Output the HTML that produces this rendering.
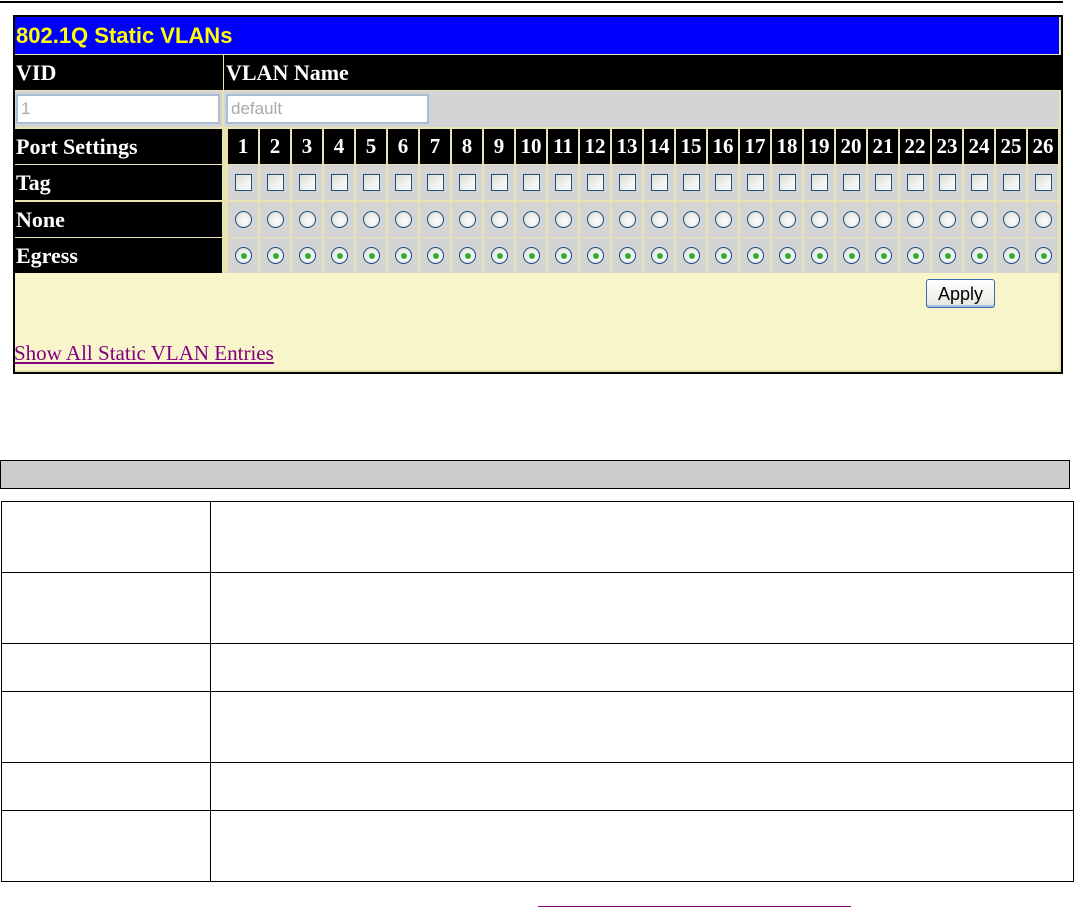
<!DOCTYPE html><html><head><style>
body{margin:0;width:1075px;height:908px;background:#fff;position:relative;overflow:hidden;font-family:"Liberation Serif",serif}
.a{position:absolute}
.row{position:absolute;left:14px;display:flex;height:35px}
.lab{width:208px;margin-right:4px;background:#000;color:#fff;font-weight:bold;font-size:22px;line-height:35px;padding-left:2px;box-sizing:border-box}
.c{width:30px;margin-left:2px;background:#d4d4d4;display:flex;align-items:center;justify-content:center}
.h .c{background:#000;color:#fff;font-weight:bold;font-size:21px}
.cb{width:15px;height:15px;border:1px solid #1c5180;background:linear-gradient(135deg,#dcdcd6,#fff)}
.rd{width:15px;height:15px;border:1px solid #1c5180;border-radius:50%;background:radial-gradient(circle at 60% 60%,#fff,#d8d8d2);position:relative}
.eg .rd::after{content:"";position:absolute;left:5px;top:5px;width:6px;height:6px;border-radius:50%;background:#2fb12f}
.inp{position:absolute;height:30px;border:2px solid #a9bed4;background:#fff;box-sizing:border-box;font-family:"Liberation Sans",sans-serif;font-size:17px;color:#aaa;padding-left:3px;line-height:26px}
</style></head><body>
<div class="a" style="left:0;top:1px;width:1063px;height:2px;background:#000"></div>
<div class="a" style="left:13px;top:15px;width:1046px;height:355px;border:2px solid #000;background:#e8e4b2"></div>
<div class="a" style="left:15px;top:273px;width:1044px;height:97px;background:#f7f5c9"></div>
<div class="a" style="left:15px;top:17px;width:1044px;height:37px;background:#0000ff;color:#ffff00;font-family:'Liberation Sans',sans-serif;font-size:22px;font-weight:bold;line-height:37px;padding-left:1px;box-sizing:border-box">802.1Q Static VLANs</div>
<div class="a" style="left:15px;top:55px;width:207px;height:35px;background:#000;color:#fff;font-weight:bold;font-size:22px;line-height:35px;padding-left:1px">VID</div>
<div class="a" style="left:224px;top:55px;width:835px;height:35px;background:#000;color:#fff;font-weight:bold;font-size:22px;line-height:35px;padding-left:2px">VLAN Name</div>
<div class="a" style="left:15px;top:91px;width:1044px;height:36px;background:#d4d4d4"></div>
<div class="a" style="left:222px;top:91px;width:2px;height:37px;background:#e8e4b2"></div>
<div class="inp" style="left:16px;top:94px;width:204px">1</div>
<div class="inp" style="left:226px;top:94px;width:203px">default</div>
<div class="row h" style="top:129px"><div class="lab">Port Settings</div><div class="c">1</div><div class="c">2</div><div class="c">3</div><div class="c">4</div><div class="c">5</div><div class="c">6</div><div class="c">7</div><div class="c">8</div><div class="c">9</div><div class="c">10</div><div class="c">11</div><div class="c">12</div><div class="c">13</div><div class="c">14</div><div class="c">15</div><div class="c">16</div><div class="c">17</div><div class="c">18</div><div class="c">19</div><div class="c">20</div><div class="c">21</div><div class="c">22</div><div class="c">23</div><div class="c">24</div><div class="c">25</div><div class="c">26</div></div>
<div class="row" style="top:165px"><div class="lab">Tag</div><div class="c"><i class="cb"></i></div><div class="c"><i class="cb"></i></div><div class="c"><i class="cb"></i></div><div class="c"><i class="cb"></i></div><div class="c"><i class="cb"></i></div><div class="c"><i class="cb"></i></div><div class="c"><i class="cb"></i></div><div class="c"><i class="cb"></i></div><div class="c"><i class="cb"></i></div><div class="c"><i class="cb"></i></div><div class="c"><i class="cb"></i></div><div class="c"><i class="cb"></i></div><div class="c"><i class="cb"></i></div><div class="c"><i class="cb"></i></div><div class="c"><i class="cb"></i></div><div class="c"><i class="cb"></i></div><div class="c"><i class="cb"></i></div><div class="c"><i class="cb"></i></div><div class="c"><i class="cb"></i></div><div class="c"><i class="cb"></i></div><div class="c"><i class="cb"></i></div><div class="c"><i class="cb"></i></div><div class="c"><i class="cb"></i></div><div class="c"><i class="cb"></i></div><div class="c"><i class="cb"></i></div><div class="c"><i class="cb"></i></div></div>
<div class="row" style="top:202px"><div class="lab">None</div><div class="c"><i class="rd"></i></div><div class="c"><i class="rd"></i></div><div class="c"><i class="rd"></i></div><div class="c"><i class="rd"></i></div><div class="c"><i class="rd"></i></div><div class="c"><i class="rd"></i></div><div class="c"><i class="rd"></i></div><div class="c"><i class="rd"></i></div><div class="c"><i class="rd"></i></div><div class="c"><i class="rd"></i></div><div class="c"><i class="rd"></i></div><div class="c"><i class="rd"></i></div><div class="c"><i class="rd"></i></div><div class="c"><i class="rd"></i></div><div class="c"><i class="rd"></i></div><div class="c"><i class="rd"></i></div><div class="c"><i class="rd"></i></div><div class="c"><i class="rd"></i></div><div class="c"><i class="rd"></i></div><div class="c"><i class="rd"></i></div><div class="c"><i class="rd"></i></div><div class="c"><i class="rd"></i></div><div class="c"><i class="rd"></i></div><div class="c"><i class="rd"></i></div><div class="c"><i class="rd"></i></div><div class="c"><i class="rd"></i></div></div>
<div class="row eg" style="top:238px"><div class="lab">Egress</div><div class="c"><i class="rd"></i></div><div class="c"><i class="rd"></i></div><div class="c"><i class="rd"></i></div><div class="c"><i class="rd"></i></div><div class="c"><i class="rd"></i></div><div class="c"><i class="rd"></i></div><div class="c"><i class="rd"></i></div><div class="c"><i class="rd"></i></div><div class="c"><i class="rd"></i></div><div class="c"><i class="rd"></i></div><div class="c"><i class="rd"></i></div><div class="c"><i class="rd"></i></div><div class="c"><i class="rd"></i></div><div class="c"><i class="rd"></i></div><div class="c"><i class="rd"></i></div><div class="c"><i class="rd"></i></div><div class="c"><i class="rd"></i></div><div class="c"><i class="rd"></i></div><div class="c"><i class="rd"></i></div><div class="c"><i class="rd"></i></div><div class="c"><i class="rd"></i></div><div class="c"><i class="rd"></i></div><div class="c"><i class="rd"></i></div><div class="c"><i class="rd"></i></div><div class="c"><i class="rd"></i></div><div class="c"><i class="rd"></i></div></div>
<div class="a" style="left:926px;top:279px;width:69px;height:29px;border:1px solid #3c6ab0;border-radius:3px;background:linear-gradient(#fff,#e6e6e0);box-shadow:inset 0 -2px 0 #a8c0e8;font-family:'Liberation Sans',sans-serif;font-size:18px;line-height:28px;text-align:center;box-sizing:border-box">Apply</div>
<div class="a" style="left:14px;top:340px;color:#800080;font-size:21px;line-height:26px;text-decoration:underline">Show All Static VLAN Entries</div>
<div class="a" style="left:0;top:460px;width:1070px;height:29px;border:1px solid #000;background:#cccccc;box-sizing:border-box"></div>
<div class="a" style="left:1px;top:501px;width:1073px;height:381px;border:1px solid #000;box-sizing:border-box"></div>
<div class="a" style="left:210px;top:501px;width:1px;height:381px;background:#000"></div>
<div class="a" style="left:1px;top:572px;width:1073px;height:1px;background:#000"></div>
<div class="a" style="left:1px;top:643px;width:1073px;height:1px;background:#000"></div>
<div class="a" style="left:1px;top:691px;width:1073px;height:1px;background:#000"></div>
<div class="a" style="left:1px;top:762px;width:1073px;height:1px;background:#000"></div>
<div class="a" style="left:1px;top:810px;width:1073px;height:1px;background:#000"></div>
<div class="a" style="left:538px;top:906px;width:313px;height:1px;background:#800080"></div>
</body></html>
